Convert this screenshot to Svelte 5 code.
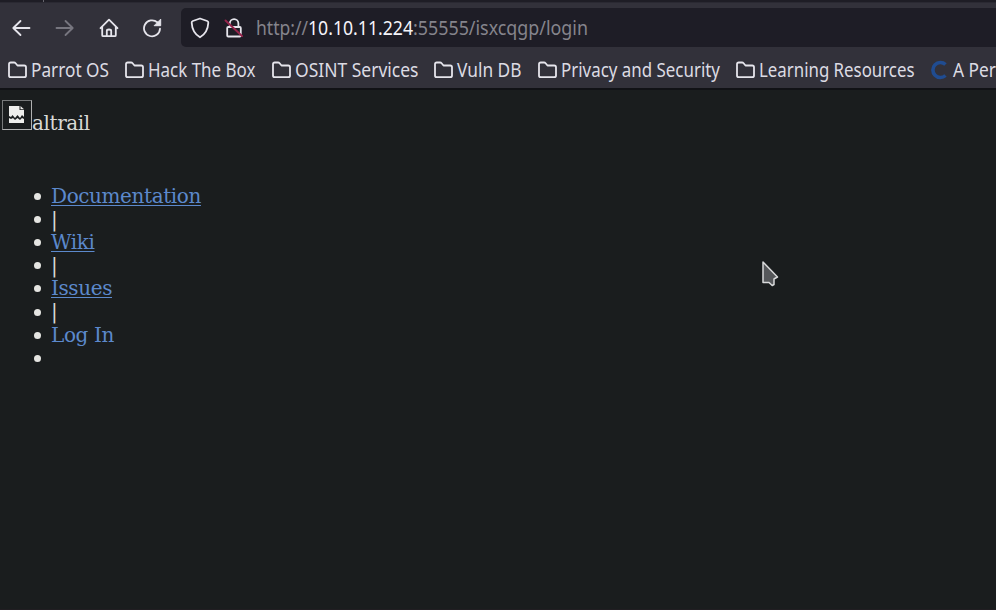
<script>
  const bookmarks = [
    { name: 'Parrot OS', width: 78 },
    { name: 'Hack The Box', width: 107.5 },
    { name: 'OSINT Services', width: 123.5 },
    { name: 'Vuln DB', width: 64.5 },
    { name: 'Privacy and Security', width: 159 },
    { name: 'Learning Resources', width: 155.5 }
  ];

  const links = [
    { text: 'Documentation', kind: 'link' },
    { text: '|', kind: 'bar' },
    { text: 'Wiki', kind: 'link' },
    { text: '|', kind: 'bar' },
    { text: 'Issues', kind: 'link' },
    { text: '|', kind: 'bar' },
    { text: 'Log In', kind: 'login' },
    { text: '', kind: 'empty' }
  ];
</script>

{#snippet label(text, width, tone)}
  <svg class="label {tone}" {width} height="28">
    <text x="0" y="21" textLength={width} lengthAdjust="spacingAndGlyphs">{text}</text>
  </svg>
{/snippet}

<div class="window">
  <div class="tabs"><i></i></div>
  <nav class="toolbar">
    <div class="buttons">
      <svg width="20" height="20" viewBox="0 0 20 20"><path d="M18.500 10H2.5M9.5 3L2.3 10l7.2 7" /></svg>
      <svg class="dim" width="20" height="20" viewBox="0 0 20 20"><path d="M1.5 10h16M10.5 3l7.2 7-7.2 7" /></svg>
      <svg width="20" height="20" viewBox="0 0 20 20"><path d="M1.5 10.2L10 1.7l8.5 8.5M3.2 9v8.2q0 1 1 1h11.6q1 0 1-1V9M7.8 18v-5q0-1.5 2.2-1.5t2.2 1.5v5" /></svg>
      <svg width="20" height="20" viewBox="0 0 20 20"><path d="M15.3 4.3A8 8 0 1 0 18 10.7" /><path class="solid" d="M18.7 1.5v6.2h-6.2z" /></svg>
    </div>
    <div class="address">
      <svg width="20" height="22" viewBox="0 0 20 22"><path d="M10 1.5L17.2 4q1.2.4 1.1 1.7C18 12.5 15.5 17 10 20.3 4.5 17 2 12.5 1.7 5.7 1.6 4.4 2.8 4 2.8 4z" /></svg>
      <svg width="20" height="22" viewBox="0 0 20 22"><path d="M5.8 9.5V6.5a4.3 4.3 0 0 1 8.6 0V10M4.200 10h11.600q1 0 1 1v7.500q0 1-1 1H4.200q-1 0-1-1V11q0-1 1-1z" /><path class="slash" d="M1.500 3.500l16.500 15.500" /></svg>
      <div class="url">
        {@render label('http://', 52, 'muted')}
        {@render label('10.10.11.224', 105, 'host')}
        {@render label(':55555/isxcqgp/login', 175, 'muted')}
      </div>
    </div>
  </nav>
  <div class="bookmarks">
    {#each bookmarks as item}
      <div class="bookmark">
        <svg width="19" height="18" viewBox="0 0 19 18"><path d="M1 4v10.500q0 1.700 1.700 1.700h13.600q1.700 0 1.700-1.700V6.200q0-1.700-1.700-1.700H9.500L7.600 2.200Q7 1.500 6 1.500H2.700Q1 1.500 1 3.200z" /></svg>
        {@render label(item.name, item.width, 'plain')}
      </div>
    {/each}
    <div class="bookmark">
      <svg class="crest" width="19" height="20" viewBox="0 0 19 20"><path d="M15.500 4.500A7.500 7.500 0 1 0 15.500 15.500" /></svg>
      {@render label('A Per', 43, 'plain')}
    </div>
  </div>
  <main>
    <div class="brand">
      <span class="missing">
        <svg width="16" height="20" viewBox="0 0 16 20">
          <path d="M0 1h10.500v4H15v7l-2-2-2 3-2.500-3L6 13l-2.500-3L2 12l-2-1z" />
          <path d="M0 13l2 1 2-1 2 2 2.500-2 2.500 2 2-2 2 1v4H0z" />
          <path d="M11.500 1L15 4.300h-3.500z" />
        </svg>
      </span><span>altrail</span>
    </div>
    <ul>
      {#each links as item}
        <li><i></i><span class={item.kind}>{item.text}</span></li>
      {/each}
    </ul>
    <svg class="pointer" width="20" height="30" viewBox="0 0 20 30"><path d="M2 2v20.500h6l3.200 3 1.800-1V19l3.500-2z" /></svg>
  </main>
</div>

<style>
  :global(body) {
    margin: 0;
    background: #1a1d1e;
  }
  .window {
    width: 996px;
    height: 610px;
    display: flex;
    flex-direction: column;
    overflow: hidden;
    background: #32313a;
    font-family: 'Noto Sans', sans-serif;
  }
  .tabs {
    flex: none;
    height: 2px;
    background: #1e1d25;
    border-bottom: 1px solid #2a2932;
    display: flex;
  }
  .tabs i {
    width: 1px;
    margin-left: 43px;
    background: #66656d;
  }
  .toolbar {
    flex: none;
    height: 50px;
    box-sizing: border-box;
    padding-bottom: 1px;
    display: flex;
    align-items: center;
  }
  svg {
    flex: none;
    display: block;
    fill: none;
    stroke: #e6e5ec;
    stroke-width: 1.8;
    stroke-linejoin: round;
    stroke-linecap: round;
  }
  .buttons {
    flex: none;
    width: 181px;
    box-sizing: border-box;
    padding-left: 11px;
    display: flex;
    gap: 23.8px;
  }
  .dim {
    stroke: #77767f;
  }
  .solid {
    fill: #e6e5ec;
    stroke-width: 1;
  }
  .slash {
    stroke: #96254c;
    stroke-width: 2;
  }
  .address {
    flex: 1;
    height: 39px;
    border-radius: 5px 0 0 5px;
    background: #1e1d26;
    display: flex;
    align-items: center;
    padding-left: 9px;
    gap: 14px;
  }
  .url {
    display: flex;
    margin-left: -2px;
  }
  .label {
    stroke: none;
    fill: #dcdbe3;
    font-size: 19px;
    overflow: visible;
  }
  .muted {
    fill: #85848c;
  }
  .host {
    fill: #f5f4fa;
  }
  .bookmarks {
    flex: none;
    height: 35px;
    display: flex;
    align-items: center;
    gap: 16px;
    padding: 0 0 1px 8px;
    box-sizing: border-box;
  }
  .bookmark {
    flex: none;
    display: flex;
    align-items: center;
    gap: 4px;
  }
  .crest {
    stroke: #204c91;
    stroke-width: 3.6;
    stroke-linecap: butt;
  }
  main {
    flex: 1;
    position: relative;
    border-top: 2px solid #111216;
    border-bottom: 1px solid #211e22;
    background: #1a1d1e;
    color: #d9d9d6;
    font: 20px/23.1px 'DejaVu Serif', serif;
    letter-spacing: -0.4px;
  }
  .brand {
    display: flex;
    align-items: flex-end;
    padding: 10px 0 0 2px;
    height: 33px;
  }
  .brand > span:last-child {
    margin-bottom: -2px;
  }
  .missing {
    width: 30px;
    height: 30px;
    box-sizing: border-box;
    border: 1px solid #77797a;
    border-right-color: #b0b1b1;
    border-bottom-color: #b0b1b1;
    margin-bottom: 3px;
    padding: 4px 0 0 6px;
  }
  .missing svg {
    fill: #eeeeec;
    stroke: none;
  }
  ul {
    list-style: none;
    margin: 52px 0 0;
    padding: 0 0 0 34px;
  }
  li {
    height: 23.1px;
    display: flex;
    align-items: center;
  }
  li i {
    width: 7px;
    height: 7px;
    border-radius: 50%;
    background: #e5e5e2;
    margin-right: 10px;
  }
  .link,
  .login {
    color: #5c89cc;
  }
  .link {
    text-decoration: underline;
    text-decoration-thickness: 1px;
    text-underline-offset: 2px;
  }
  .pointer {
    position: absolute;
    left: 761px;
    top: 170px;
    fill: #55575a;
    stroke: #d8d9da;
    stroke-width: 1.5;
  }
</style>
